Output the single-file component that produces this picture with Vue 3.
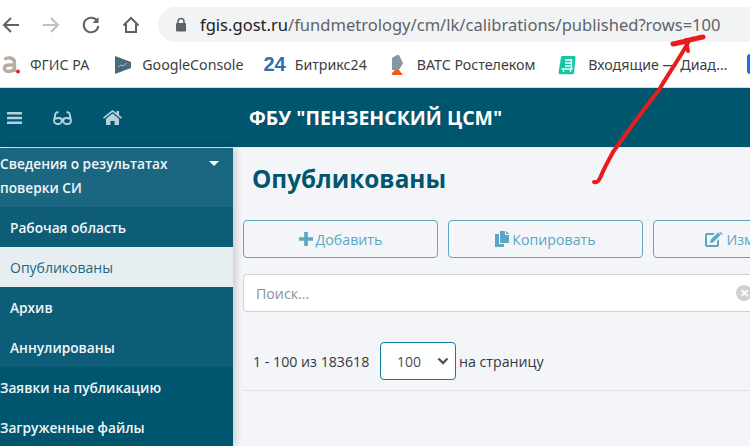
<script setup>
const bookmarks = [
  { name: 'ФГИС РА', icon: 'a' },
  { name: 'GoogleConsole', icon: 'g' },
  { name: 'Битрикс24', icon: 'b' },
  { name: 'ВАТС Ростелеком', icon: 'r' },
  { name: 'Входящие — Диад...', icon: 'd' }
]

const subItems = [
  { name: 'Рабочая область', active: false },
  { name: 'Опубликованы', active: true },
  { name: 'Архив', active: false },
  { name: 'Аннулированы', active: false }
]
</script>

<template>
  <div class="page">
    <div class="chrome">
      <div class="toolbar">
        <div class="nav-icons">
          <svg width="20" height="20" viewBox="0 0 20 20" fill="none" stroke="#5f6368" stroke-width="2"><path d="M18 10H3M10 3l-7 7 7 7" /></svg>
          <svg width="20" height="20" viewBox="0 0 20 20" fill="none" stroke="#bdc1c6" stroke-width="2"><path d="M2 10h15M10 3l7 7-7 7" /></svg>
          <svg width="20" height="20" viewBox="0 0 20 20" fill="none" stroke="#5f6368" stroke-width="2"><path d="M16.5 6.5A7.3 7.3 0 1 0 17.3 11" /><path d="M17.5 2v6h-6" fill="#5f6368" stroke="none" /></svg>
          <svg width="20" height="20" viewBox="0 0 20 20" fill="none" stroke="#5f6368" stroke-width="2"><path d="M2.5 10.5 10 3l7.500 7.500M5 9v8h10V9" /></svg>
        </div>
        <div class="address">
          <svg width="12" height="15" viewBox="0 0 12 15"><path d="M3 6V4.500a3 3 0 0 1 6 0V6" fill="none" stroke="#5f6368" stroke-width="1.500" /><rect x="1" y="6" width="10" height="8.500" rx="1" fill="#5f6368" /></svg>
          <span class="url"><b>fgis.gost.ru</b>/fundmetrology/cm/lk/calibrations/published?rows=100</span>
        </div>
      </div>
      <div class="bookmarks">
        <div v-for="b in bookmarks" :key="b.name" class="bookmark" :class="'bm-' + b.icon">
          <svg v-if="b.icon === 'a'" width="18" height="20" viewBox="0 0 18 20"><path d="M2.500 4.500C5 2 12.500 2 12.500 7.500V17M12.500 10H7c-6 0-6 6.500-.5 6.500 2.500 0 4.500-1 6-3" fill="none" stroke="#b8aca0" stroke-width="3.400" /><circle cx="16" cy="16.500" r="2" fill="#e8193c" /></svg>
          <svg v-if="b.icon === 'g'" width="18" height="20" viewBox="0 0 18 20"><path d="M1 1l16 6v6L1 19z" fill="#4a6a7c" /><path d="M4 12l3-2 2 1 4-3" fill="none" stroke="#a8bcc6" stroke-width="1" /></svg>
          <span v-if="b.icon === 'b'" class="b24">24</span>
          <svg v-if="b.icon === 'r'" width="14" height="22" viewBox="0 0 14 22"><path d="M2 4l5-3h2l4 8-4 7H2z" fill="#84969f" /><path d="M2 21v-2l3-3h4l4 5z" fill="#f4591f" /></svg>
          <svg v-if="b.icon === 'd'" width="18" height="20" viewBox="0 0 18 20"><path d="M4.500 1h12a1 1 0 0 1 1 1.200L16 18a1.500 1.500 0 0 1-1.500 1.300H2a1.500 1.500 0 0 1-1.500-1.700L3 2.200A1.500 1.500 0 0 1 4.500 1z" fill="#12c7a3" /><path d="M7 5h6.500v9M7 8h6.500M7 11h6.500M3.500 14h11M5.500 14v3M12.500 14v3" fill="none" stroke="#fff" stroke-width="1.300" /></svg>
          <span>{{ b.name }}</span>
        </div>
        <span class="bm-cut"></span>
      </div>
    </div>

    <header class="topbar">
      <div class="top-icons">
        <svg width="15" height="14" viewBox="0 0 15 14" fill="#b6d2dc"><rect y="1" width="15" height="2.600" rx=".5" /><rect y="5.700" width="15" height="2.600" rx=".5" /><rect y="10.400" width="15" height="2.600" rx=".5" /></svg>
        <svg width="19" height="14" viewBox="0 0 19 14" fill="none" stroke="#b6d2dc" stroke-width="1.900"><path d="M1 9.500c0-2 3-2.500 5-2.500 2 0 2.800 1 2.800 2.500 0 2-1.500 3.500-3.800 3.500C2.500 13 1 11.500 1 9.500zM18 9.500c0-2-3-2.500-5-2.500-2 0-2.800 1-2.800 2.500 0 2 1.500 3.500 3.800 3.500 2.500 0 4-1.500 4-3.500zM8.500 8.500c.7-.5 1.300-.5 2 0M1 9.500 2.500 2.500C2.800 1.300 4 1 5.500 1.500M18 9.500l-1.500-7c-.3-1.200-1.500-1.500-3-1" /></svg>
        <svg width="19" height="15" viewBox="0 0 19 15" fill="#b6d2dc"><path d="M9.500 0 0 7.500l1 1.200 8.500-6.700L18 8.700l1-1.200-3-2.400V1h-2.500v2.100z" /><path d="M9.500 3.500 3 8.700V15h4.500v-4h4v4H16V8.700z" /></svg>
      </div>
      <div class="org">ФБУ "ПЕНЗЕНСКИЙ ЦСМ"</div>
    </header>

    <div class="body">
      <aside class="sidebar">
        <div class="group-head">
          <span>Сведения о результатах поверки СИ</span>
          <i class="caret"></i>
        </div>
        <div
          v-for="item in subItems"
          :key="item.name"
          class="sub-item"
          :class="{ active: item.active }"
        >{{ item.name }}</div>
        <div class="side-item">Заявки на публикацию</div>
        <div class="side-item">Загруженные файлы</div>
      </aside>

      <main class="content">
        <h1 class="title">Опубликованы</h1>
        <div class="actions">
          <button class="action">
            <svg width="14" height="14" viewBox="0 0 14 14" fill="#5ba7c4"><path d="M5.200 0h3.600v5.200H14v3.600H8.800V14H5.200V8.800H0V5.200h5.200z" /></svg>
            Добавить
          </button>
          <button class="action">
            <svg width="14" height="16" viewBox="0 0 14 16" fill="#5ba7c4"><path d="M0 3h4v10h5v3H0z" /><path d="M5 0h5v4h4v8H5z" /><path d="M11 0l3 3h-3z" /></svg>
            Копировать
          </button>
          <button class="action">
            <svg width="18" height="15" viewBox="0 0 18 15"><path d="M0 3a2 2 0 0 1 2-2h8L8 3H2v10h10V9l2-2v6a2 2 0 0 1-2 2H2a2 2 0 0 1-2-2z" fill="#5ba7c4" /><path d="M5 11l.7-3.300L13 .5l2.500 2.500-7.300 7.300zM14 0l1-.5 2.500 2.500-1 1z" fill="#5ba7c4" /></svg>
            Изменить
          </button>
        </div>
        <div class="search">
          <span>Поиск...</span>
          <i class="clear">✕</i>
        </div>
        <div class="pager">
          <span class="count">1 - 100 из 183618</span>
          <div class="select">
            <span>100</span>
            <svg width="12" height="8" viewBox="0 0 12 8" fill="none" stroke="#555" stroke-width="2.400"><path d="M1.500 1.500 6 6l4.500-4.500" /></svg>
          </div>
          <span>на страницу</span>
        </div>
        <div class="rule"></div>
      </main>
    </div>

    <svg class="arrow" width="750" height="446" viewBox="0 0 750 446" fill="none" stroke="#e81c1c" stroke-linecap="round" stroke-linejoin="round">
      <path d="M594 182c4 1 5-2 7-6 3-8 8-16 12-24 15-21 30-42 46-62 8-14 18-28 29-47" stroke-width="4" />
      <path d="M673 44c10-2 20-5 30-7" stroke-width="5" />
      <path d="M686 40l2 11" stroke-width="4" />
    </svg>
  </div>
</template>

<style>
html, body { margin: 0; padding: 0; }
</style>

<style scoped>
.page {
  position: relative;
  width: 750px;
  height: 446px;
  overflow: hidden;
  display: flex;
  flex-direction: column;
  font-family: "Open Sans", "Noto Sans", sans-serif;
  background: #f3f5f9;
}

.chrome {
  height: 87px;
  background: #fff;
  border-bottom: 1px solid #d5dadd;
  flex: none;
}

.toolbar {
  display: flex;
  align-items: center;
  height: 35px;
  padding-top: 7px;
}

.nav-icons {
  display: flex;
  gap: 20px;
  width: 158px;
  padding-left: 1px;
  box-sizing: border-box;
}

.address {
  flex: 1;
  height: 35px;
  background: #f1f3f4;
  border-radius: 18px 0 0 18px;
  display: flex;
  align-items: center;
  padding-left: 17px;
  gap: 13px;
}

.url {
  font-family: "Noto Sans", sans-serif;
  font-size: 16.55px;
  color: #5f6368;
  white-space: nowrap;
}

.url b {
  font-weight: 400;
  color: #202124;
}

.bookmarks {
  display: flex;
  align-items: center;
  height: 45px;
  padding-left: 2px;
  font-family: "Noto Sans", sans-serif;
  font-size: 14.2px;
  color: #3c4043;
  white-space: nowrap;
  position: relative;
}

.bookmark {
  display: flex;
  align-items: center;
  gap: 10px;
  margin-right: 23px;
}

.bm-a {
  margin-right: 25px;
}

.bm-g {
  margin-right: 20px;
}

.bm-b {
  gap: 9px;
}

.bm-r {
  gap: 13px;
}

.bm-d {
  gap: 12px;
}

.b24 {
  font-family: "Liberation Sans", sans-serif;
  font-weight: 700;
  font-size: 20px;
  color: #2f6fad;
}

.bm-cut {
  position: absolute;
  left: 747px;
  top: 12px;
  width: 14px;
  height: 20px;
  border-radius: 3px;
  background: #1a73e8;
}

.topbar {
  height: 59px;
  flex: none;
  background: #00556f;
  display: flex;
  align-items: center;
}

.top-icons {
  width: 249px;
  display: flex;
  align-items: center;
  gap: 31px;
  padding-left: 7px;
  box-sizing: border-box;
}

.org {
  font-size: 19.5px;
  font-weight: 700;
  color: #fff;
}

.body {
  flex: 1;
  display: flex;
  min-height: 0;
  border-top: 1px solid #e3edf1;
}

.sidebar {
  width: 233px;
  flex: none;
  background: #00556f;
  font-size: 13.7px;
  font-weight: 600;
  color: #f2f6f8;
  box-shadow: 2px 0 8px rgba(0, 0, 0, 0.2);
  z-index: 1;
}

.group-head {
  height: 59px;
  box-sizing: border-box;
  background: #1b6680;
  line-height: 24px;
  padding: 4px 20px 0 0;
  display: flex;
  justify-content: space-between;
}

.group-head span {
  width: 190px;
}

.caret {
  width: 0;
  height: 0;
  margin: 9px -6px 0 0;
  border-left: 5px solid transparent;
  border-right: 5px solid transparent;
  border-top: 5px solid #fff;
}

.sub-item {
  height: 40px;
  line-height: 42px;
  padding-left: 10px;
  background: #0e5d78;
}

.sub-item.active {
  background: #e7eef2;
  color: #1b6680;
  font-weight: 400;
  font-size: 14px;
}

.side-item {
  height: 40px;
  line-height: 42px;
}

.content {
  flex: 1;
  min-width: 0;
  padding-left: 10px;
}

.title {
  margin: 14px 0 0 9px;
  font-size: 24.3px;
  line-height: 33px;
  font-weight: 700;
  color: #00556f;
}

.actions {
  display: flex;
  gap: 10px;
  margin-top: 25px;
}

.action {
  width: 195px;
  height: 38px;
  flex: none;
  box-sizing: border-box;
  border: 1px solid #5ba7c4;
  border-radius: 4px;
  background: transparent;
  font-family: inherit;
  font-size: 14.2px;
  color: #5ba7c4;
  display: flex;
  align-items: center;
  justify-content: center;
  gap: 3px;
  padding: 0;
}

.search {
  margin-top: 16px;
  height: 38px;
  box-sizing: border-box;
  background: #fff;
  border: 1px solid #ccd3d8;
  border-right: 0;
  border-radius: 4px 0 0 4px;
  font-size: 14.2px;
  color: #8a9097;
  display: flex;
  align-items: center;
  justify-content: space-between;
  padding: 0 0 0 12px;
}

.clear {
  flex: none;
  width: 16px;
  height: 16px;
  border-radius: 50%;
  background: #cfd2d4;
  color: #fff;
  font-style: normal;
  font-size: 11px;
  font-weight: 700;
  line-height: 16px;
  text-align: center;
  margin-right: -2px;
}

.pager {
  display: flex;
  align-items: center;
  margin-top: 30px;
  height: 38px;
  font-size: 14.2px;
  color: #33383c;
  padding-left: 10px;
}

.count {
  width: 127px;
  white-space: nowrap;
}

.select {
  width: 76px;
  height: 38px;
  box-sizing: border-box;
  border: 1px solid #0d7fa5;
  border-radius: 4px;
  background: #fff;
  font-size: 14px;
  color: #495057;
  display: flex;
  align-items: center;
  justify-content: space-between;
  padding: 0 6px 0 16px;
  margin-right: 3px;
}

.rule {
  margin-top: 10px;
  height: 1px;
  background: #dee2e6;
}

.arrow {
  position: absolute;
  left: 0;
  top: 0;
  z-index: 2;
  pointer-events: none;
}
</style>
